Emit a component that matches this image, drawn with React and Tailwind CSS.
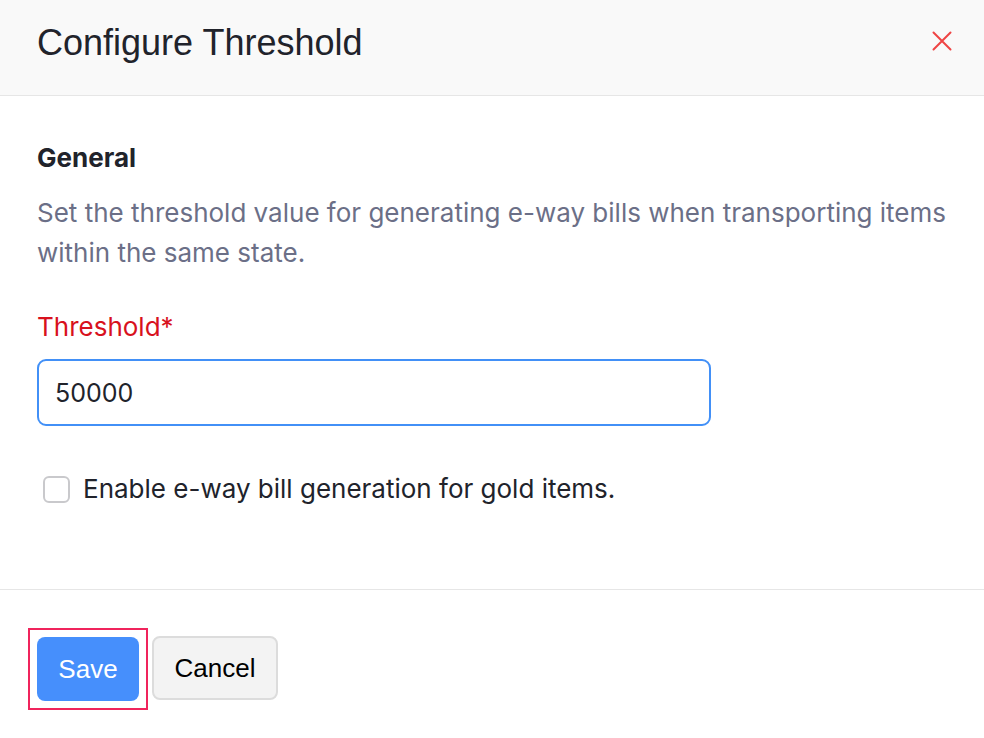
export default function App() {
  return (
    <div className="w-[984px] h-[738px] bg-white flex flex-col" style={{ fontFamily: "Inter, 'Noto Sans', sans-serif" }}>
      <div className="h-[96px] bg-[#f9f9f9] border-b border-[#e6e6e6] flex items-start justify-between pl-[37px] pr-[30px] pt-[23px]">
        <h1 className="text-[36px] leading-[40px] text-[#21232b] font-['Liberation_Sans',Arial,sans-serif]">Configure Threshold</h1>
        <button className="mt-[6px] w-[24px] h-[24px] flex items-center justify-center text-[#ef4444]">
          <svg width="20" height="20" viewBox="0 0 20 20" fill="none" stroke="currentColor" strokeWidth="2" strokeLinecap="round">
            <path d="M1.5 1.5 L18.5 18.5 M18.5 1.5 L1.5 18.5" />
          </svg>
        </button>
      </div>

      <div className="flex-1 px-[37px] pt-[44px] border-b border-[#e6e6e6]">
        <h2 className="text-[26px] font-bold text-[#21232b] leading-[36px]">General</h2>
        <p className="mt-[17px] text-[26px] leading-[40px] text-[#6b6f87]">
          Set the threshold value for generating e-way bills when transporting items within the same state.
        </p>

        <label className="block mt-[37px] text-[26px] text-[#d8111d] leading-[34px]">Threshold*</label>
        <input
          className="mt-[15px] w-[674px] h-[67px] rounded-[9px] border-2 border-[#4290f7] px-[16px] text-[25px] text-[#21232b] outline-none"
          defaultValue="50000"
        />

        <label className="mt-[47px] flex items-center gap-[13px] pl-[6px]">
          <span className="w-[27px] h-[27px] rounded-[6px] border-2 border-[#c9c9cc] bg-white"></span>
          <span className="text-[26px] leading-[32px] text-[#21232b]">Enable e-way bill generation for gold items.</span>
        </label>
      </div>

      <div className="h-[148px] px-[28px] pt-[38px] flex items-start gap-[4px] font-['Liberation_Sans',Arial,sans-serif]">
        <div className="border-2 border-[#f0245c] p-[7px]">
          <button className="w-[102px] h-[64px] rounded-[8px] bg-[#468ffc] text-white text-[26px]">Save</button>
        </div>
        <button className="mt-[8px] w-[126px] h-[64px] rounded-[8px] bg-[#f3f3f3] border-2 border-[#dcdcdc] text-black text-[26px]">Cancel</button>
      </div>
    </div>
  );
}
